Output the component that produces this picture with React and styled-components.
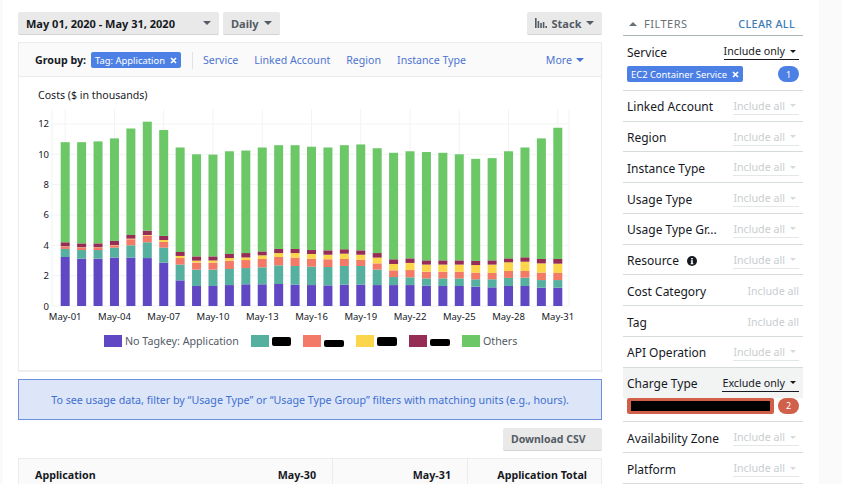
import React from "react";
import styled, { createGlobalStyle } from "styled-components";

const FONT = `"Noto Sans", "Open Sans", "Liberation Sans", sans-serif`;

const GlobalStyle = createGlobalStyle`
  html, body {
    margin: 0;
    padding: 0;
    background: #fafafa;
    font-family: ${FONT};
    color: #16191f;
  }
`;

const Page = styled.div`
  width: 842px;
  height: 484px;
  overflow: hidden;
  display: flex;
`;

const Main = styled.div`
  margin-left: 3px;
  width: 816px;
  height: 484px;
  box-sizing: border-box;
  padding: 12px 16px 0 15px;
  background: #fff;
  display: flex;
  gap: 21px;
`;

const LeftColumn = styled.div`
  width: 584px;
  flex: none;
`;

const Toolbar = styled.div`
  display: flex;
  gap: 4px;
  margin-bottom: 7px;
`;

const ToolButton = styled.div`
  height: 23px;
  box-sizing: border-box;
  width: ${(p) => p.$width}px;
  margin-left: ${(p) => (p.$pushRight ? "auto" : "0")};
  padding: 0 8px;
  display: flex;
  align-items: center;
  justify-content: space-between;
  background: #e9e9e9;
  border-bottom: 1px solid #cfd3d3;
  border-radius: 2px;
  font-size: ${(p) => p.$fontSize || 11}px;
  font-weight: 700;
  color: ${(p) => (p.$muted ? "#545b64" : "#16191f")};
  white-space: nowrap;
`;

const Caret = styled.span`
  display: inline-block;
  flex: none;
  width: 0;
  height: 0;
  border-left: ${(p) => p.$size || 4}px solid transparent;
  border-right: ${(p) => p.$size || 4}px solid transparent;
  border-top: ${(p) => p.$size || 4}px solid ${(p) => p.$color || "#545b64"};
`;

const Card = styled.div`
  height: 329px;
  box-sizing: border-box;
  border: 1px solid #eaeded;
  box-shadow: 0 1px 1px rgba(0, 21, 41, 0.06);
`;

const GroupBar = styled.div`
  height: 34px;
  box-sizing: border-box;
  padding: 1px 17px 0 16px;
  display: flex;
  align-items: center;
  background: #fafafa;
  border-bottom: 1px solid #eaeded;
`;

const GroupLabel = styled.span`
  font-size: 10.7px;
  font-weight: 700;
  margin-right: 5px;
`;

const Chip = styled.span`
  display: inline-flex;
  align-items: center;
  justify-content: space-between;
  height: 16px;
  box-sizing: border-box;
  padding: 0 4px;
  gap: 5px;
  background: #4d80e4;
  border-radius: 2px;
  color: #fff;
  font-size: 9.4px;
  white-space: nowrap;
`;

const BarDivider = styled.span`
  width: 1px;
  height: 17px;
  background: #dfe3e3;
  margin: 0 10px 0 11px;
`;

const GroupLink = styled.span`
  font-size: 10.6px;
  color: #4d74d1;
  margin-right: 16px;
  white-space: nowrap;
`;

const MoreLink = styled.span`
  margin-left: auto;
  display: flex;
  align-items: center;
  gap: 4px;
  font-size: 10.6px;
  color: #4d74d1;
`;

const ChartTitle = styled.div`
  padding: 9px 0 0 19px;
  height: 18px;
  line-height: 18px;
  font-size: 10.6px;
`;

const ChartSvg = styled.svg`
  display: block;
  width: 582px;
  height: 219px;
`;

const AxisText = styled.text`
  font-family: ${FONT};
  font-size: 9.5px;
  fill: #16191f;
`;

const Legend = styled.div`
  display: flex;
  align-items: center;
  padding-left: 85px;
  margin-top: 11px;
  height: 14px;
`;

const LegendItem = styled.div`
  display: flex;
  align-items: center;
  gap: 3px;
  margin-right: 12px;
  font-size: 10.7px;
  color: #545b64;
  white-space: nowrap;
`;

const Swatch = styled.span`
  width: 18px;
  height: 12px;
  background: ${(p) => p.$color};
`;

const Scribble = styled.span`
  display: block;
  width: ${(p) => p.$width}px;
  height: ${(p) => p.$height}px;
  margin-top: ${(p) => p.$drop}px;
  background: #000;
  border-radius: 2px;
`;

const InfoBox = styled.div`
  margin-top: 8px;
  height: 41px;
  box-sizing: border-box;
  border: 1px solid #6d8fdc;
  background: #dce6f8;
  display: flex;
  align-items: center;
  justify-content: center;
  font-size: 10.7px;
  color: #3f6fd0;
`;

const DownloadRow = styled.div`
  display: flex;
  justify-content: flex-end;
  margin-top: 8px;
`;

const Table = styled.div`
  margin-top: 7px;
  display: grid;
  grid-template-columns: 313px 135px 136px;
  height: 60px;
  border: 1px solid #eaeded;
  box-sizing: border-box;
  background: #fafafa;
`;

const HeadCell = styled.div`
  padding: 9px 16px 0 16px;
  display: flex;
  justify-content: ${(p) => (p.$spread ? "space-between" : "flex-end")};
  border-left: ${(p) => (p.$spread ? "none" : "1px solid #eaeded")};
  font-size: 10.7px;
  font-weight: 700;
  white-space: nowrap;
`;

const Sidebar = styled.div`
  width: 180px;
  flex: none;
`;

const FilterHead = styled.div`
  height: 24px;
  box-sizing: border-box;
  padding: 0 8px 0 6px;
  display: flex;
  align-items: center;
  gap: 7px;
  border-bottom: 1px solid #aab7b8;
`;

const UpCaret = styled(Caret)`
  transform: rotate(180deg);
`;

const FilterTitle = styled.span`
  font-size: 11px;
  letter-spacing: 0.5px;
  color: #687078;
`;

const ClearAll = styled.span`
  margin-left: auto;
  font-size: 10.8px;
  font-weight: 500;
  letter-spacing: 0.3px;
  color: #3b7cb5;
`;

const FilterBlock = styled.div`
  box-sizing: border-box;
  border-bottom: 1px solid #d5dbdb;
  height: ${(p) => (p.$tall ? "54.75px" : "30.75px")};
`;

const FilterLine = styled.div`
  height: 30px;
  box-sizing: border-box;
  padding: 2px 4px 0 4px;
  display: flex;
  align-items: center;
  justify-content: space-between;
  background: ${(p) => (p.$active ? "#f2f3f3" : "transparent")};
`;

const FilterName = styled.span`
  display: flex;
  align-items: center;
  gap: 8px;
  font-size: 12px;
  white-space: nowrap;
`;

const IncludeControl = styled.span`
  display: flex;
  align-items: center;
  gap: 5px;
  padding: 0 ${(p) => (p.$plain ? 0 : 3)}px 1px 0;
  font-size: 10.7px;
  white-space: nowrap;
  color: ${(p) => (p.$set ? "#16191f" : "#c9cdcf")};
  border-bottom: ${(p) => (p.$plain ? "none" : `1px solid ${p.$set ? "#16191f" : "#e4e7e7"}`)};
`;

const ChipLine = styled.div`
  padding: 0 4px;
  display: flex;
  align-items: center;
  justify-content: space-between;
`;

const Badge = styled.span`
  width: 21px;
  height: 16px;
  border-radius: 8px;
  display: flex;
  align-items: center;
  justify-content: center;
  background: ${(p) => p.$color};
  color: #fff;
  font-size: 9px;
`;

const HiddenChip = styled.span`
  width: 147px;
  height: 16px;
  box-sizing: border-box;
  padding: 3px 4px;
  border-radius: 2px;
  background: #d0604a;
`;

const HiddenText = styled.span`
  display: block;
  width: 139px;
  height: 10px;
  background: #000;
`;

const CloseIcon = () => (
  <svg width="7" height="7" viewBox="0 0 7 7">
    <path d="M1 1l5 5M6 1l-5 5" stroke="#fff" strokeWidth="1.7" />
  </svg>
);

const StackIcon = () => (
  <svg width="12" height="10" viewBox="0 0 12 10">
    <path
      d="M0 0h1.6v10H0zM2.6 3h1.6v7H2.6zM5.2 5h1.6v5H5.2zM7.8 4h1.6v6H7.8zM10.4 8H12v2h-1.6z"
      fill="#545b64"
    />
  </svg>
);

const InfoIcon = () => (
  <svg width="10" height="10" viewBox="0 0 10 10">
    <circle cx="5" cy="5" r="5" fill="#16191f" />
    <path d="M4.2 2h1.6v1.4H4.2zM3.8 4.2h2v3h.6v1H3.6v-1h.6v-2h-.4z" fill="#fff" />
  </svg>
);

const COLORS = ["#6048c4", "#56b0a0", "#f27a66", "#fbd54a", "#962d56", "#6cc867"];

// cumulative tops of the stacked segments for each day, read off the y axis
const DAYS = [
  [3.23, 3.76, 3.9, 3.93, 4.2, 10.8],
  [3.12, 3.69, 3.85, 3.87, 4.13, 10.8],
  [3.12, 3.69, 3.85, 3.87, 4.13, 10.85],
  [3.19, 3.85, 4.0, 4.02, 4.29, 11.05],
  [3.19, 4.0, 4.4, 4.44, 4.68, 11.7],
  [3.16, 4.2, 4.64, 4.68, 4.97, 12.15],
  [2.86, 3.85, 4.22, 4.35, 4.62, 11.6],
  [1.69, 2.73, 3.16, 3.3, 3.56, 10.45],
  [1.32, 2.4, 2.86, 2.99, 3.27, 10.0],
  [1.32, 2.4, 2.86, 3.0, 3.27, 9.98],
  [1.38, 2.44, 2.99, 3.16, 3.43, 10.2],
  [1.43, 2.5, 3.03, 3.2, 3.49, 10.25],
  [1.43, 2.55, 3.1, 3.34, 3.6, 10.45],
  [1.45, 2.68, 3.23, 3.49, 3.76, 10.6],
  [1.41, 2.64, 3.19, 3.49, 3.76, 10.6],
  [1.38, 2.59, 3.12, 3.43, 3.69, 10.5],
  [1.36, 2.57, 3.08, 3.38, 3.67, 10.45],
  [1.41, 2.64, 3.1, 3.45, 3.74, 10.6],
  [1.41, 2.64, 3.05, 3.38, 3.67, 10.65],
  [1.38, 2.4, 2.81, 3.19, 3.49, 10.4],
  [1.38, 1.91, 2.35, 2.77, 3.08, 10.1],
  [1.38, 1.89, 2.37, 2.84, 3.14, 10.2],
  [1.34, 1.82, 2.26, 2.73, 3.01, 10.15],
  [1.32, 1.82, 2.26, 2.73, 3.01, 10.1],
  [1.32, 1.82, 2.26, 2.73, 3.01, 10.0],
  [1.27, 1.76, 2.2, 2.7, 2.97, 9.7],
  [1.23, 1.76, 2.18, 2.73, 3.01, 9.75],
  [1.32, 1.85, 2.31, 2.88, 3.14, 10.2],
  [1.32, 1.87, 2.31, 2.92, 3.21, 10.45],
  [1.21, 1.71, 2.2, 2.81, 3.1, 11.05],
  [1.21, 1.71, 2.18, 2.79, 3.1, 11.75],
];

// chart coordinates: svg origin sits at page (19, 104)
const Y0 = 202;
const UNIT = 15.17;
const X0 = 41.7;
const STEP = 16.42;
const BAR = 9;

const Chart = () => {
  const ticks = [0, 2, 4, 6, 8, 10, 12];
  const labels = [];
  for (let i = 0; i < 31; i += 3) {
    labels.push({ i, text: `May-${String(i + 1).padStart(2, "0")}` });
  }
  return (
    <ChartSvg viewBox="0 0 582 219">
      {ticks.map((t) => (
        <line key={t} x1="33" x2="550" y1={Y0 - t * UNIT} y2={Y0 - t * UNIT} stroke="#f2f3f3" />
      ))}
      {labels.map((l) => {
        const x = X0 + BAR / 2 + l.i * STEP;
        return <line key={l.i} x1={x} x2={x} y1="5" y2={Y0} stroke="#f2f3f3" />;
      })}
      <line x1="33" x2="33" y1="5" y2={Y0} stroke="#f2f3f3" />
      <line x1="550" x2="550" y1="5" y2={Y0} stroke="#f2f3f3" />
      {DAYS.map((day, d) =>
        day.map((top, s) => {
          const bottom = s === 0 ? 0 : day[s - 1];
          return (
            <rect
              key={s}
              x={X0 + d * STEP}
              width={BAR}
              y={Y0 - top * UNIT}
              height={(top - bottom) * UNIT}
              fill={COLORS[s]}
            />
          );
        })
      )}
      {ticks.map((t) => (
        <AxisText key={t} x="30" y={Y0 - t * UNIT + 3.5} textAnchor="end">
          {t}
        </AxisText>
      ))}
      {labels.map((l) => (
        <AxisText key={l.i} x={X0 + BAR / 2 + l.i * STEP} y="215.5" textAnchor="middle">
          {l.text}
        </AxisText>
      ))}
    </ChartSvg>
  );
};

const FILTERS_TOP = ["Linked Account", "Region", "Instance Type", "Usage Type", "Usage Type Gr..."];

const Filter = ({ children }) => (
  <FilterBlock>
    <FilterLine>
      <FilterName>{children}</FilterName>
      <IncludeControl>
        Include all <Caret $size={3} $color="#d5d9da" />
      </IncludeControl>
    </FilterLine>
  </FilterBlock>
);

const PlainFilter = ({ children }) => (
  <FilterBlock>
    <FilterLine>
      <FilterName>{children}</FilterName>
      <IncludeControl $plain>Include all</IncludeControl>
    </FilterLine>
  </FilterBlock>
);

const App = () => (
  <Page>
    <GlobalStyle />
    <Main>
      <LeftColumn>
        <Toolbar>
          <ToolButton $width={201}>
            May 01, 2020 - May 31, 2020
            <Caret />
          </ToolButton>
          <ToolButton $width={57} $muted>
            Daily
            <Caret />
          </ToolButton>
          <ToolButton $width={75} $muted $pushRight>
            <StackIcon />
            Stack
            <Caret />
          </ToolButton>
        </Toolbar>
        <Card>
          <GroupBar>
            <GroupLabel>Group by:</GroupLabel>
            <Chip>
              Tag: Application <CloseIcon />
            </Chip>
            <BarDivider />
            <GroupLink>Service</GroupLink>
            <GroupLink>Linked Account</GroupLink>
            <GroupLink>Region</GroupLink>
            <GroupLink>Instance Type</GroupLink>
            <MoreLink>
              More <Caret $color="#4d74d1" />
            </MoreLink>
          </GroupBar>
          <ChartTitle>Costs ($ in thousands)</ChartTitle>
          <Chart />
          <Legend>
            <LegendItem>
              <Swatch $color={COLORS[0]} />
              No Tagkey: Application
            </LegendItem>
            <LegendItem>
              <Swatch $color={COLORS[1]} />
              <Scribble $width={19} $height={9} $drop={1} />
            </LegendItem>
            <LegendItem>
              <Swatch $color={COLORS[2]} />
              <Scribble $width={20} $height={7} $drop={4} />
            </LegendItem>
            <LegendItem>
              <Swatch $color={COLORS[3]} />
              <Scribble $width={20} $height={9} $drop={0} />
            </LegendItem>
            <LegendItem>
              <Swatch $color={COLORS[4]} />
              <Scribble $width={20} $height={7} $drop={3} />
            </LegendItem>
            <LegendItem>
              <Swatch $color={COLORS[5]} />
              Others
            </LegendItem>
          </Legend>
        </Card>
        <InfoBox>
          To see usage data, filter by “Usage Type” or “Usage Type Group” filters with matching units (e.g., hours).
        </InfoBox>
        <DownloadRow>
          <ToolButton $width={99} $muted $fontSize={10.5}>
            Download CSV
          </ToolButton>
        </DownloadRow>
        <Table>
          <HeadCell $spread>
            <span>Application</span>
            <span>May-30</span>
          </HeadCell>
          <HeadCell>May-31</HeadCell>
          <HeadCell>Application Total</HeadCell>
        </Table>
      </LeftColumn>
      <Sidebar>
        <FilterHead>
          <UpCaret $color="#687078" />
          <FilterTitle>FILTERS</FilterTitle>
          <ClearAll>CLEAR ALL</ClearAll>
        </FilterHead>
        <FilterBlock $tall>
          <FilterLine>
            <FilterName>Service</FilterName>
            <IncludeControl $set>
              Include only <Caret $size={3} $color="#16191f" />
            </IncludeControl>
          </FilterLine>
          <ChipLine>
            <Chip>
              EC2 Container Service <CloseIcon />
            </Chip>
            <Badge $color="#4d80e4">1</Badge>
          </ChipLine>
        </FilterBlock>
        {FILTERS_TOP.map((name) => (
          <Filter key={name}>{name}</Filter>
        ))}
        <Filter>
          Resource <InfoIcon />
        </Filter>
        <PlainFilter>Cost Category</PlainFilter>
        <PlainFilter>Tag</PlainFilter>
        <Filter>API Operation</Filter>
        <FilterBlock $tall>
          <FilterLine $active>
            <FilterName>Charge Type</FilterName>
            <IncludeControl $set>
              Exclude only <Caret $size={3} $color="#16191f" />
            </IncludeControl>
          </FilterLine>
          <ChipLine>
            <HiddenChip>
              <HiddenText />
            </HiddenChip>
            <Badge $color="#d0604a">2</Badge>
          </ChipLine>
        </FilterBlock>
        <Filter>Availability Zone</Filter>
        <Filter>Platform</Filter>
      </Sidebar>
    </Main>
  </Page>
);

export default App;
